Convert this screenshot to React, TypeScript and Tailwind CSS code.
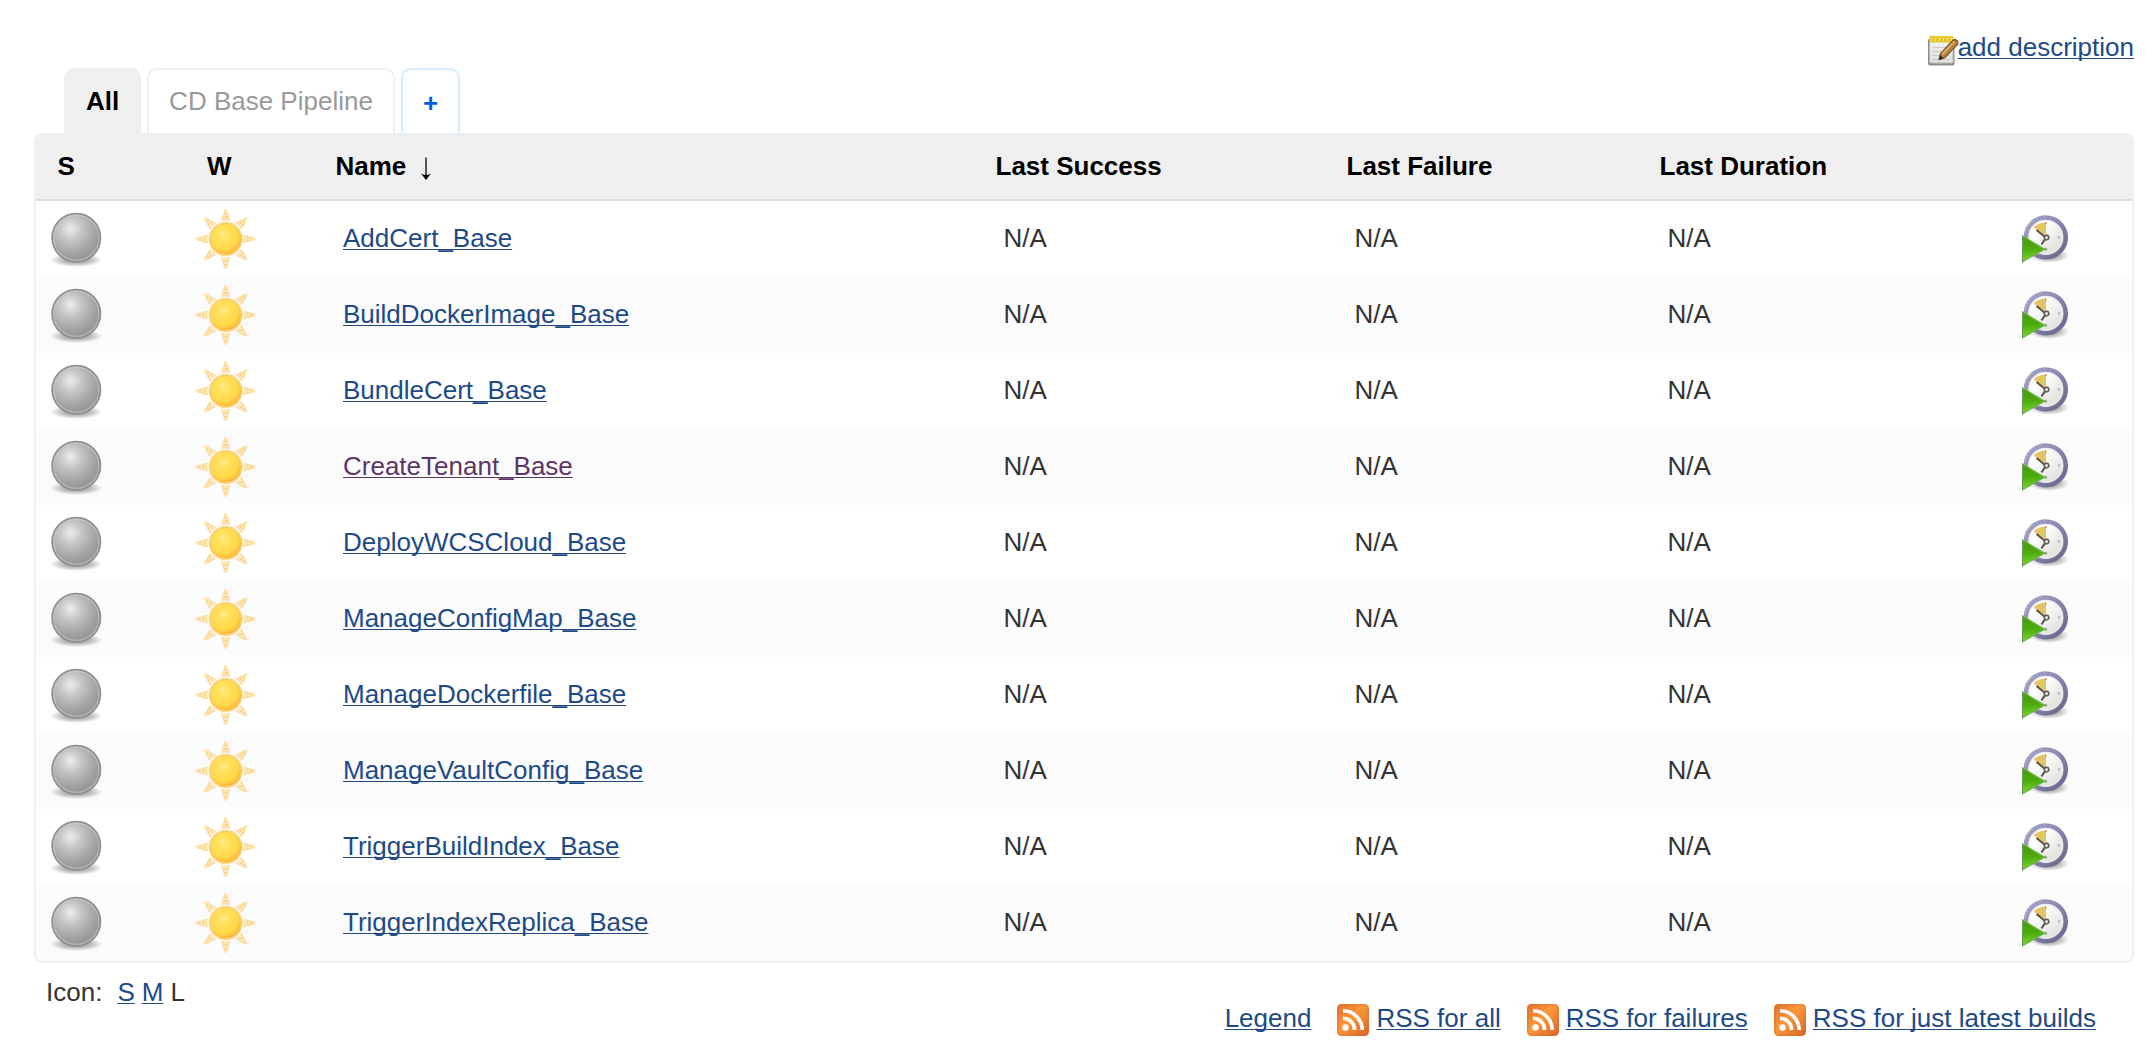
import React from "react";

type Job = { name: string; visited?: boolean };

const jobs: Job[] = [
  { name: "AddCert_Base" },
  { name: "BuildDockerImage_Base" },
  { name: "BundleCert_Base" },
  { name: "CreateTenant_Base", visited: true },
  { name: "DeployWCSCloud_Base" },
  { name: "ManageConfigMap_Base" },
  { name: "ManageDockerfile_Base" },
  { name: "ManageVaultConfig_Base" },
  { name: "TriggerBuildIndex_Base" },
  { name: "TriggerIndexReplica_Base" },
];

const feeds = ["RSS for all", "RSS for failures", "RSS for just latest builds"];

const columns =
  "grid grid-cols-[149px_150.5px_660px_351px_313px_362.500px_112px] items-center";

const linkStyle =
  "underline decoration-1 underline-offset-[2px] [text-decoration-skip-ink:none]";

function Link({ children, visited = false }: { children: React.ReactNode; visited?: boolean }) {
  return (
    <a href="#" className={`${linkStyle} ${visited ? "text-[#5c3566]" : "text-[#204a87]"}`}>
      {children}
    </a>
  );
}

function Gradients() {
  return (
    <svg className="absolute size-0" aria-hidden="true">
      <defs>
        <radialGradient id="ball" cx="0.38" cy="0.32" r="0.68">
          <stop offset="0" stopColor="#ededed" />
          <stop offset="0.35" stopColor="#c4c4c4" />
          <stop offset="0.75" stopColor="#a3a3a3" />
          <stop offset="1" stopColor="#949494" />
        </radialGradient>
        <radialGradient id="shade">
          <stop offset="0" stopColor="#000" stopOpacity="0.5" />
          <stop offset="0.6" stopColor="#000" stopOpacity="0.22" />
          <stop offset="1" stopColor="#000" stopOpacity="0" />
        </radialGradient>
        <radialGradient id="sun" cx="0.42" cy="0.36" r="0.68">
          <stop offset="0" stopColor="#ffeb85" />
          <stop offset="0.3" stopColor="#ffe05c" />
          <stop offset="0.7" stopColor="#ffd848" />
          <stop offset="1" stopColor="#fbad38" />
        </radialGradient>
        <linearGradient id="face" x1="0" y1="0" x2="1" y2="1">
          <stop offset="0.3" stopColor="#ffffff" />
          <stop offset="1" stopColor="#d5d6d2" />
        </linearGradient>
        <linearGradient id="rim" x1="0" y1="0" x2="1" y2="1">
          <stop offset="0" stopColor="#a9a9cb" />
          <stop offset="1" stopColor="#67628a" />
        </linearGradient>
        <linearGradient id="play" x1="0" y1="0" x2="0" y2="1">
          <stop offset="0" stopColor="#439d08" />
          <stop offset="0.5" stopColor="#4fac0d" />
          <stop offset="1" stopColor="#79d82b" />
        </linearGradient>
        <linearGradient id="rss" x1="0" y1="0" x2="1" y2="1">
          <stop offset="0" stopColor="#e2702d" />
          <stop offset="0.45" stopColor="#f9983a" />
          <stop offset="0.6" stopColor="#f08a36" />
          <stop offset="1" stopColor="#d9602a" />
        </linearGradient>
        <linearGradient id="paper" x1="0" y1="0" x2="0" y2="1">
          <stop offset="0" stopColor="#f4f4f2" />
          <stop offset="1" stopColor="#dededb" />
        </linearGradient>
      </defs>
    </svg>
  );
}

function BallIcon() {
  return (
    <svg viewBox="0 0 64 64" className="ml-[8px] block size-16">
      <ellipse cx="32.3" cy="53" rx="26.500" ry="7" fill="url(#shade)" />
      <circle cx="32.3" cy="30.700" r="24.200" fill="url(#ball)" stroke="#8e8e8e" strokeWidth="1.600" />
      <circle cx="32.3" cy="30.700" r="22.600" fill="none" stroke="#c4c4c4" strokeOpacity="0.65" strokeWidth="1.300" />
    </svg>
  );
}

const rayAngles = [0, 45, 90, 135, 180, 225, 270, 315];

function SunIcon() {
  return (
    <svg viewBox="0 0 64 64" className="ml-[9px] block size-16">
      {rayAngles.map((angle) => (
        <g key={angle} transform={`rotate(${angle} 31.7 32)`}>
          <path d="M30.900 2.800 H32.500 L35.600 13.600 Q31.700 12 27.800 13.600Z" fill="#fdebbb" stroke="#fad693" strokeWidth="0.900" />
          <path d="M30.300 6.500 H33.100 M29.300 10 H34.100" stroke="#fad08a" strokeWidth="1.300" />
        </g>
      ))}
      <circle cx="31.7" cy="32" r="17.200" fill="#fcdc93" />
      <circle cx="31.7" cy="32" r="15.600" fill="url(#sun)" stroke="#f9c866" strokeWidth="1" />
    </svg>
  );
}

function ScheduleIcon() {
  return (
    <svg viewBox="0 0 48 48" className="block size-12">
      <ellipse cx="27" cy="40.500" rx="20" ry="7.500" fill="url(#shade)" />
      <circle cx="23.8" cy="22.400" r="19.800" fill="url(#face)" stroke="url(#rim)" strokeWidth="4.800" />
      <circle cx="23.8" cy="22.400" r="17" fill="none" stroke="#e9e9ee" strokeWidth="1.200" />
      <path d="M11.500 12.500 Q16.500 7.300 24 7.400 V20.800Z" fill="#e2c566" />
      <path d="M23.700 7 V9.400" stroke="#b5a06a" strokeWidth="1.400" />
      <circle cx="37" cy="22.400" r="1.300" fill="#bdbdb9" />
      <path d="M14.500 15 L24 22.600 L19.500 29.500" fill="none" stroke="#55534c" strokeWidth="2" />
      <circle cx="24.500" cy="22.600" r="2.300" fill="#e2e2e0" stroke="#5a5956" strokeWidth="1.500" />
      <circle cx="23.600" cy="34.200" r="1.600" fill="#8fae80" />
      <path d="M0.500 21 L22.800 34.200 L0.500 46.800Z" fill="url(#play)" stroke="#78b356" strokeWidth="1.200" />
      <path d="M0.500 20.500 V47.500" stroke="#6b9b59" strokeWidth="1" />
    </svg>
  );
}

function NotepadIcon() {
  return (
    <svg viewBox="0 0 32 32" className="-mr-px mt-[1.500px] block h-8 w-8">
      <rect x="1" y="4.500" width="26.500" height="27" rx="2.500" fill="#8e8e88" />
      <rect x="2.600" y="5.500" width="23.400" height="23.500" rx="1.200" fill="url(#paper)" stroke="#b9b9b5" strokeWidth="1" />
      <path d="M5.500 13.500H23 M5.500 17.500H23 M5.500 21.500H22 M5.500 25.500H23" stroke="#c9c9c6" strokeWidth="1.200" />
      <path d="M2.500 2.500 Q4.500 0.800 6.500 2.500 Q8.500 0.800 10.500 2.500 Q12.500 0.800 14.500 2.500 Q16.500 0.800 18.500 2.500 Q20.500 0.800 22.500 2.500 Q24.500 0.800 26 2.500 V8 Q24 9.500 22.500 8 Q20.500 9.500 18.500 8 Q16.500 9.500 14.500 8 Q12.500 9.500 10.500 8 Q8.500 9.500 6.500 8 Q4.500 9.500 2.500 8Z" fill="#dfc02a" />
      <path d="M4.500 3V7.500 M8.500 3V7.500 M12.500 3V7.500 M16.500 3V7.500 M20.500 3V7.500 M24.300 3V7.500" stroke="#f5e468" strokeWidth="1.300" />
      <path d="M12 25.500 L13.500 19.500 L26 6.200 Q28 4.800 30.200 6.600 Q31.700 8.400 30.700 10.200 L17.800 23.800Z" fill="#b5813c" stroke="#735029" strokeWidth="1.100" />
      <path d="M15.300 20.300 L27.500 7.500" stroke="#e0b36c" strokeWidth="1.800" />
      <path d="M11.900 25.900 L13 21 L16.800 24.400Z" fill="#2e261d" />
    </svg>
  );
}

function RssIcon() {
  return (
    <svg viewBox="0 0 32 32" className="mr-[7px] mt-px block size-8">
      <rect width="32" height="32" rx="4.500" fill="url(#rss)" />
      <rect x="0.800" y="0.800" width="30.400" height="30.400" rx="4" fill="none" stroke="#da6828" strokeOpacity="0.350" strokeWidth="1.600" />
      <circle cx="8.500" cy="23.500" r="3.200" fill="#fff" />
      <path d="M6 14.200 A11.500 11.500 0 0 1 17.600 26 M6 6.800 A19.200 19.200 0 0 1 25.200 26" fill="none" stroke="#fff" strokeWidth="3.600" />
    </svg>
  );
}

export default function App() {
  return (
    <div className="flex h-[1064px] w-[2154px] flex-col overflow-hidden bg-white pl-[34px] pr-[20px] font-['Liberation_Sans',Arial,sans-serif] text-[26px] leading-[30px] text-[#333333]">
      <Gradients />
      <div className="flex h-[68px] items-start justify-end pt-[32px]">
        <span className="flex">
          <NotepadIcon />
          <Link>add description</Link>
        </span>
      </div>

      <nav className="relative z-10 -mb-[2px] flex h-[67px] gap-[6px] pl-[30px]">
        <div className="flex w-[77px] justify-center rounded-t-[10px] bg-[#efefef] pt-[18px] font-bold text-black">
          All
        </div>
        <div className="mb-[2px] flex w-[248px] justify-center rounded-t-[10px] border-2 border-b-0 border-[#f0f0f0] bg-white pt-[16px] text-[#999999]">
          CD Base Pipeline
        </div>
        <div className="flex w-[59px] justify-center rounded-t-[10px] border-2 border-b-0 border-[#d8edff] pt-[18px] font-bold text-[#005ce6]">
          +
        </div>
      </nav>

      <main className="h-[830px] shrink-0 overflow-hidden rounded-[8px] border-2 border-[#efefef]">
        <header className={`${columns} h-[66px] border-b-2 border-[#dcdcdc] bg-[#efefef] pb-[2px] font-bold text-black`}>
          <span className="pl-[21.500px]">S</span>
          <span className="pl-[22px]">W</span>
          <span className="flex items-center">
            Name
            <svg viewBox="0 0 12 24" className="ml-[14px] mt-[5px] h-6 w-3">
              <path d="M6 0.500V20" stroke="#222" strokeWidth="1.500" />
              <path d="M1 16.500 Q4 18 6 18 Q8 18 11 16.500 L6 23Z" fill="#000" />
            </svg>
          </span>
          <span>Last Success</span>
          <span>Last Failure</span>
          <span>Last Duration</span>
        </header>
        {jobs.map((job) => (
          <div key={job.name} className={`${columns} h-[76px] odd:bg-[#fbfbfb]`}>
            <BallIcon />
            <SunIcon />
            <span className="-mt-[2px] pl-[7.500px]">
              <Link visited={job.visited}>{job.name}</Link>
            </span>
            <span className="-mt-[2px] pl-[8px]">N/A</span>
            <span className="-mt-[2px] pl-[8px]">N/A</span>
            <span className="-mt-[2px] pl-[8px]">N/A</span>
            <ScheduleIcon />
          </div>
        ))}
      </main>

      <footer className="flex justify-between pl-[12px]">
        <div className="flex gap-[7px] pt-[14px]">
          <span className="mr-[8px]">Icon:</span>
          <Link>S</Link>
          <Link>M</Link>
          <span>L</span>
        </div>
        <div className="flex gap-[26px] pr-[38px] pt-[40px]">
          <Link>Legend</Link>
          {feeds.map((feed) => (
            <span key={feed} className="flex">
              <RssIcon />
              <Link>{feed}</Link>
            </span>
          ))}
        </div>
      </footer>
    </div>
  );
}
